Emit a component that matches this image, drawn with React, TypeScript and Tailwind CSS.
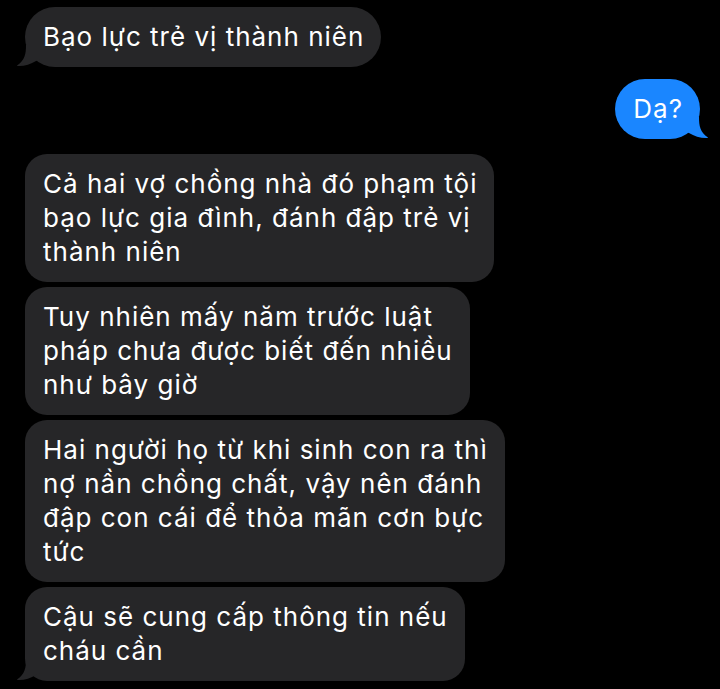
import React from "react";

const font = { fontFamily: "Inter, 'Noto Sans', sans-serif" };

function TailLeft({ color }: { color: string }) {
  return (
    <svg
      className="absolute left-[-9px] bottom-0"
      width="26"
      height="22"
      viewBox="0 0 26 22"
    >
      <path
        d="M10 0 C10 9 9 15 1 20.5 C1 21 2 21 3 21 C9 21 15 19 20 16 L26 14 L26 0 Z"
        fill={color}
      />
    </svg>
  );
}

function TailRight({ color }: { color: string }) {
  return (
    <svg
      className="absolute right-[-9px] bottom-0"
      width="26"
      height="22"
      viewBox="0 0 26 22"
      style={{ transform: "scaleX(-1)" }}
    >
      <path
        d="M10 0 C10 9 9 15 1 20.5 C1 21 2 21 3 21 C9 21 15 19 20 16 L26 14 L26 0 Z"
        fill={color}
      />
    </svg>
  );
}

function Gray({ lines, tail, rounded = "rounded-[22px]" }: { lines: string[]; tail?: boolean; rounded?: string }) {
  return (
    <div className={`relative self-start bg-[#262628] ${rounded} pl-[18px] pr-[17px] py-[13px]`}>
      {tail && <TailLeft color="#262628" />}
      <div className="relative text-[26px] leading-[34px] tracking-[1px] text-white whitespace-nowrap" style={font}>
        {lines.map((l, i) => (
          <div key={i}>{l}</div>
        ))}
      </div>
    </div>
  );
}

export default function App() {
  return (
    <div className="w-[720px] h-[689px] bg-black overflow-hidden">
      <div className="flex flex-col pl-[25px] pr-[20px] pt-[7px]">
        <Gray lines={["Bạo lực trẻ vị thành niên"]} tail rounded="rounded-[30px]" />
        <div className="relative self-end mt-[12px] bg-[#1a86ff] rounded-[30px] pl-[18px] pr-[17px] py-[13px]">
          <TailRight color="#1a86ff" />
          <div className="relative text-[26px] leading-[34px] tracking-[1px] text-white" style={font}>
            Dạ?
          </div>
        </div>
        <div className="flex flex-col gap-[5px] mt-[15px]">
          <Gray lines={["Cả hai vợ chồng nhà đó phạm tội", "bạo lực gia đình, đánh đập trẻ vị", "thành niên"]} />
          <Gray lines={["Tuy nhiên mấy năm trước luật", "pháp chưa được biết đến nhiều", "như bây giờ"]} />
          <Gray lines={["Hai người họ từ khi sinh con ra thì", "nợ nần chồng chất, vậy nên đánh", "đập con cái để thỏa mãn cơn bực", "tức"]} />
          <Gray lines={["Cậu sẽ cung cấp thông tin nếu", "cháu cần"]} tail />
        </div>
      </div>
    </div>
  );
}
